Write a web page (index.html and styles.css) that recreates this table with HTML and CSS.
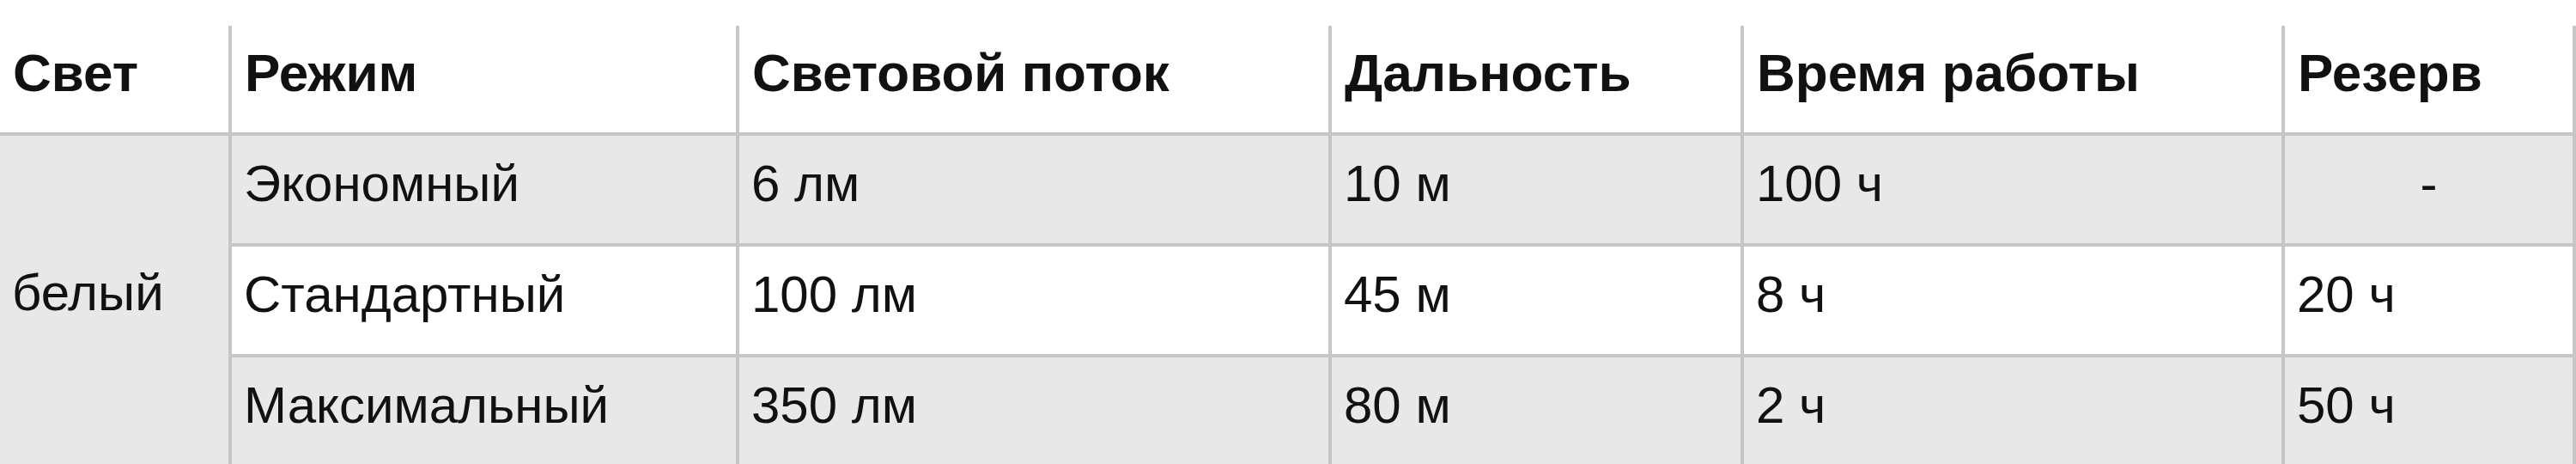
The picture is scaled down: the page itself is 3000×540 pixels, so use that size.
FILE: index.html
```html
<!DOCTYPE html>
<html lang="ru">
<head>
<meta charset="utf-8">
<title>Режимы света</title>
<link rel="stylesheet" href="styles.css">
</head>
<body>
<div class="spec" role="table">
  <div class="cell head" role="columnheader">Свет</div>
  <div class="cell head" role="columnheader">Режим</div>
  <div class="cell head" role="columnheader">Световой поток</div>
  <div class="cell head" role="columnheader">Дальность</div>
  <div class="cell head" role="columnheader">Время работы</div>
  <div class="cell head" role="columnheader">Резерв</div>

  <div class="cell light" role="rowheader">белый</div>

  <div class="cell gray">Экономный</div>
  <div class="cell gray">6 лм</div>
  <div class="cell gray">10 м</div>
  <div class="cell gray">100 ч</div>
  <div class="cell gray center">-</div>

  <div class="cell">Стандартный</div>
  <div class="cell">100 лм</div>
  <div class="cell">45 м</div>
  <div class="cell">8 ч</div>
  <div class="cell">20 ч</div>

  <div class="cell gray">Максимальный</div>
  <div class="cell gray">350 лм</div>
  <div class="cell gray">80 м</div>
  <div class="cell gray">2 ч</div>
  <div class="cell gray">50 ч</div>
</div>
</body>
</html>
```
FILE: styles.css
```css
html, body {
  margin: 0;
  padding: 0;
  background: #ffffff;
}

body {
  padding-top: 30px;
  font-family: "Liberation Sans", Arial, Helvetica, sans-serif;
  color: #111111;
}

.spec {
  display: grid;
  width: 3000px;
  grid-template-columns: 270px 591px 690px 480px 630px 339px;
  grid-template-rows: 128px 129px 129px 129px;
}

.cell {
  box-sizing: border-box;
  border-right: 4px solid #c6c6c6;
  border-bottom: 4px solid #c6c6c6;
  padding: 26px 0 0 14px;
  font-size: 60px;
  line-height: 1;
  white-space: nowrap;
}

.head {
  font-weight: bold;
  font-size: 62px;
  padding-top: 24px;
  padding-left: 15px;
  background: #ffffff;
}

.light {
  grid-row: 2 / span 3;
  background: #e8e8e8;
  padding-top: 153px;
}

.gray {
  background: #e8e8e8;
}

.center {
  text-align: center;
  padding-left: 0;
}
```
